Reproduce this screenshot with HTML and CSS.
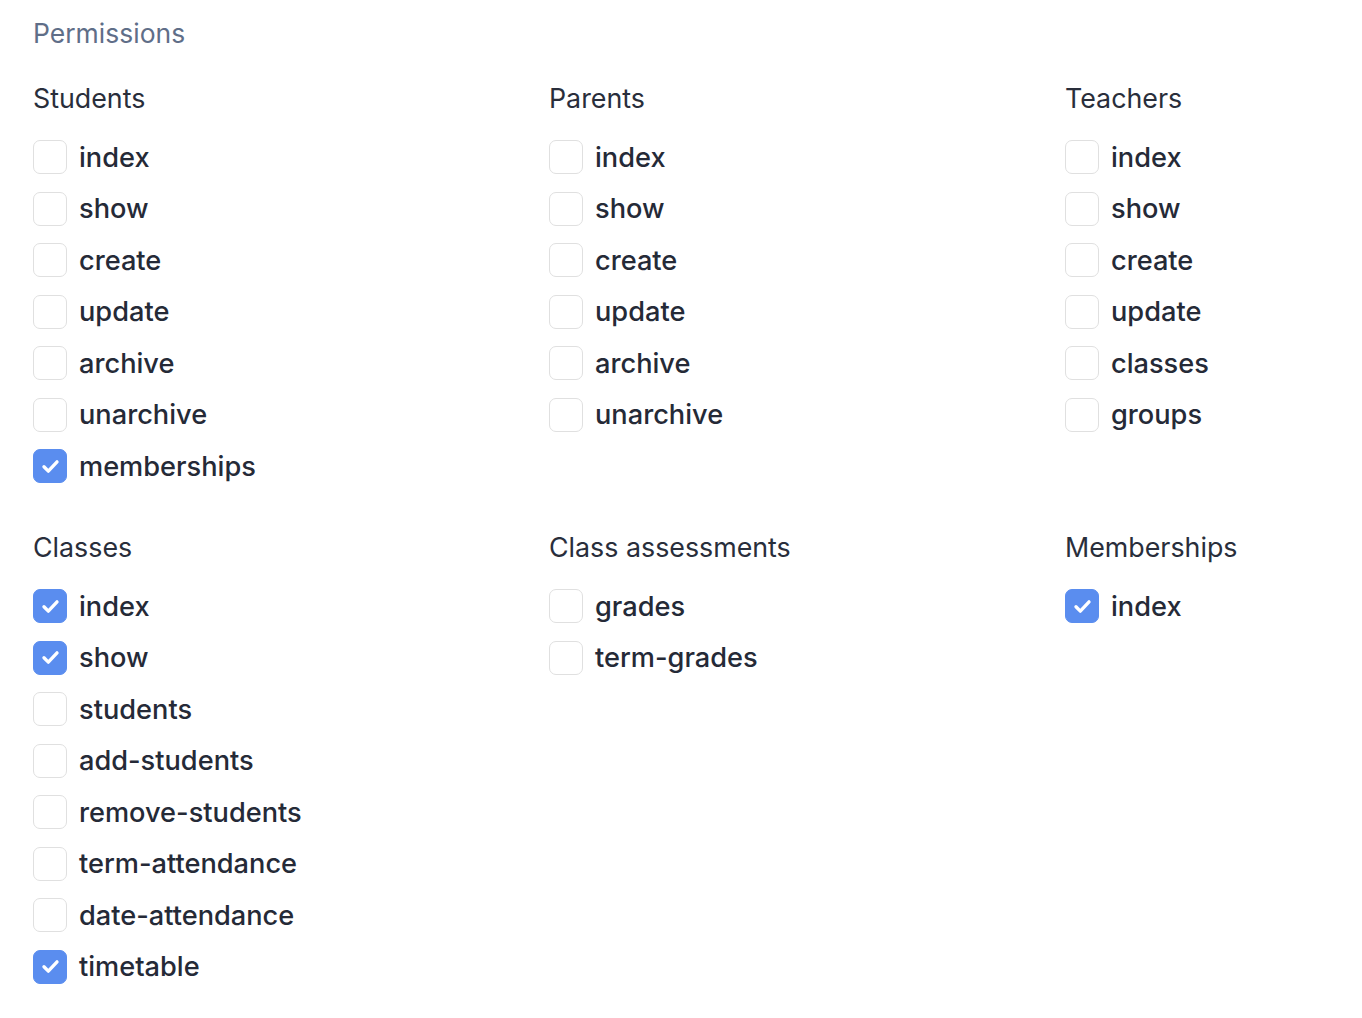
FILE: index.html
```html
<!DOCTYPE html>
<html lang="en">

<head>
  <meta charset="UTF-8">
  <meta name="viewport" content="width=device-width, initial-scale=1.0">
  <title>Permissions</title>
  <link rel="stylesheet" href="styles.css">
</head>

<body>
  <div class="permissions">
    <h2 class="title">Permissions</h2>

    <div class="grid">
      <!-- Students -->
      <div class="group">
        <h3>Students</h3>
        <ul>
          <li><span class="box"></span>index</li>
          <li><span class="box"></span>show</li>
          <li><span class="box"></span>create</li>
          <li><span class="box"></span>update</li>
          <li><span class="box"></span>archive</li>
          <li><span class="box"></span>unarchive</li>
          <li><span class="box checked"><svg viewBox="0 0 20 20"><path d="M5.5 10.2l3 3 6-6.4" /></svg></span>memberships</li>
        </ul>
      </div>

      <!-- Parents -->
      <div class="group">
        <h3>Parents</h3>
        <ul>
          <li><span class="box"></span>index</li>
          <li><span class="box"></span>show</li>
          <li><span class="box"></span>create</li>
          <li><span class="box"></span>update</li>
          <li><span class="box"></span>archive</li>
          <li><span class="box"></span>unarchive</li>
        </ul>
      </div>

      <!-- Teachers -->
      <div class="group">
        <h3>Teachers</h3>
        <ul>
          <li><span class="box"></span>index</li>
          <li><span class="box"></span>show</li>
          <li><span class="box"></span>create</li>
          <li><span class="box"></span>update</li>
          <li><span class="box"></span>classes</li>
          <li><span class="box"></span>groups</li>
        </ul>
      </div>

      <!-- Classes -->
      <div class="group">
        <h3>Classes</h3>
        <ul>
          <li><span class="box checked"><svg viewBox="0 0 20 20"><path d="M5.5 10.2l3 3 6-6.4" /></svg></span>index</li>
          <li><span class="box checked"><svg viewBox="0 0 20 20"><path d="M5.5 10.2l3 3 6-6.4" /></svg></span>show</li>
          <li><span class="box"></span>students</li>
          <li><span class="box"></span>add-students</li>
          <li><span class="box"></span>remove-students</li>
          <li><span class="box"></span>term-attendance</li>
          <li><span class="box"></span>date-attendance</li>
          <li><span class="box checked"><svg viewBox="0 0 20 20"><path d="M5.5 10.2l3 3 6-6.4" /></svg></span>timetable</li>
        </ul>
      </div>

      <!-- Class assessments -->
      <div class="group">
        <h3>Class assessments</h3>
        <ul>
          <li><span class="box"></span>grades</li>
          <li><span class="box"></span>term-grades</li>
        </ul>
      </div>

      <!-- Memberships -->
      <div class="group">
        <h3>Memberships</h3>
        <ul>
          <li><span class="box checked"><svg viewBox="0 0 20 20"><path d="M5.5 10.2l3 3 6-6.4" /></svg></span>index</li>
        </ul>
      </div>
    </div>
  </div>
</body>

</html>
```

FILE: styles.css
```css
* {
  margin: 0;
  padding: 0;
  box-sizing: border-box;
}

li {
  list-style-type: none;
}

body {
  background-color: #fff;
  font-family: Inter, "Noto Sans", sans-serif;
  color: #262b38;
}

.permissions {
  padding: 16px 0 0 33px;
}

.title {
  font-size: 26.5px;
  font-weight: 400;
  line-height: 34px;
  color: #5f6e88;
}

.grid {
  display: grid;
  grid-template-columns: 516px 516px 1fr;
  row-gap: 47px;
  margin-top: 31px;
}

.group h3 {
  font-size: 26.8px;
  font-weight: 400;
  line-height: 34px;
  color: #292e3b;
}

.group ul {
  display: flex;
  flex-direction: column;
  gap: 17.5px;
  margin-top: 25px;
}

.group li {
  display: flex;
  align-items: center;
  gap: 12px;
  height: 34px;
  font-size: 27.2px;
  font-weight: 500;
  color: #252a37;
}

.box {
  display: flex;
  align-items: center;
  justify-content: center;
  width: 34px;
  height: 34px;
  border: 1.5px solid #e0e0e0;
  border-radius: 7px;
  background-color: #fff;
}

.box.checked {
  border-color: #5a8def;
  background-color: #5a8def;
}

.box svg {
  width: 29px;
  height: 29px;
  fill: none;
  stroke: #fff;
  stroke-width: 2.3;
  stroke-linecap: round;
  stroke-linejoin: round;
}
```
